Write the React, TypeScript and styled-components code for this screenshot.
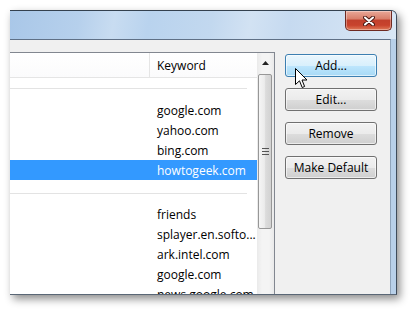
import React from "react";
import styled, { createGlobalStyle } from "styled-components";

const kText = "#000000";
const kClient = "#f0f0f0";
const kListBorder = "#828790";
const kFrame = "#b8d0e9";
const kSelect = "#3399ff";

const GlobalStyle = createGlobalStyle`
  html, body {
    margin: 0;
    padding: 0;
    background: #ffffff;
  }
  body {
    font-family: "Open Sans", "Noto Sans", sans-serif;
    font-size: 12px;
    color: ${kText};
  }
`;

const Stage = styled.div`
  position: relative;
  width: 417px;
  height: 313px;
  padding: 10px 0 0 10px;
  box-sizing: border-box;
  overflow: hidden;
`;

const Window = styled.div`
  width: 387px;
  height: 285px;
  box-sizing: border-box;
  display: flex;
  flex-direction: column;
  background: ${kFrame};
  border-top: 1px solid #34414f;
  border-right: 1px solid #3e4b5a;
  border-bottom: 1px solid #5a6776;
  border-top-right-radius: 6px;
  box-shadow: 3px 4px 8px rgba(0, 0, 0, 0.45);
  overflow: hidden;
`;

const TitleBar = styled.div`
  height: 28px;
  flex: none;
  display: flex;
  justify-content: flex-end;
  align-items: flex-start;
  padding-right: 4px;
  background: linear-gradient(
    100deg,
    #a9c7e8 0%,
    #b6d0ec 18%,
    #c8dcf1 27%,
    #b9d3ee 36%,
    #c2d8ef 52%,
    #d2e2f3 62%,
    #c6daf0 72%,
    #d9e7f5 100%
  );
`;

const CloseButton = styled.div`
  width: 47px;
  height: 20px;
  box-sizing: border-box;
  display: flex;
  align-items: center;
  justify-content: center;
  border: 1px solid #6e2a22;
  border-top: none;
  border-radius: 0 0 5px 5px;
  background: linear-gradient(
    to bottom,
    #e9a898 0%,
    #d9806c 40%,
    #c2402c 50%,
    #c8432d 75%,
    #e07a58 100%
  );
  box-shadow: inset 0 0 0 1px rgba(255, 255, 255, 0.35);
`;

const Body = styled.div`
  flex: 1;
  display: flex;
  padding-right: 5px;
  min-height: 0;
`;

const Client = styled.div`
  flex: 1;
  display: flex;
  align-items: stretch;
  gap: 10px;
  padding-top: 12px;
  background: ${kClient};
  border-top: 1px solid #5f7086;
  border-right: 1px solid #8fa4bb;
  min-height: 0;
  overflow: hidden;
`;

const ListPanel = styled.div`
  width: 265px;
  flex: none;
  box-sizing: border-box;
  display: flex;
  background: #ffffff;
  border-top: 1px solid ${kListBorder};
  border-right: 1px solid ${kListBorder};
  overflow: hidden;
`;

const ListArea = styled.div`
  width: 247px;
  flex: none;
  display: flex;
  flex-direction: column;
`;

const Header = styled.div`
  height: 25px;
  flex: none;
  box-sizing: border-box;
  display: flex;
  border-bottom: 1px solid #e5e5e5;
  background: linear-gradient(to bottom, #ffffff, #fbfbfc);
`;

const HeadCell = styled.div<{ $width?: number }>`
  ${(p) => (p.$width ? `width: ${p.$width}px; flex: none;` : "flex: 1;")}
  box-sizing: border-box;
  display: flex;
  align-items: center;
  padding-left: 7px;
  border-right: ${(p) => (p.$width ? "1px solid #e5e5e5" : "none")};
`;

const GroupGap = styled.div<{ $height: number; $line: number }>`
  height: ${(p) => p.$height}px;
  flex: none;
  box-sizing: border-box;
  padding-top: ${(p) => p.$line}px;

  &::before {
    content: "";
    display: block;
    width: 237px;
    height: 1px;
    background: #e3e3e3;
  }
`;

const Row = styled.div<{ $selected?: boolean }>`
  height: 20px;
  flex: none;
  display: flex;
  align-items: center;
  padding-left: 147px;
  white-space: nowrap;
  background: ${(p) => (p.$selected ? kSelect : "transparent")};
  color: ${(p) => (p.$selected ? "#ffffff" : kText)};
`;

const Scrollbar = styled.div`
  width: 17px;
  flex: none;
  display: flex;
  flex-direction: column;
  align-items: center;
  background: linear-gradient(to right, #eaeaea, #f4f4f4 30%, #f4f4f4 70%, #eaeaea);
`;

const ArrowButton = styled.div`
  width: 17px;
  height: 20px;
  flex: none;
  display: flex;
  align-items: center;
  justify-content: center;
`;

const Thumb = styled.div`
  width: 14px;
  height: 155px;
  margin-top: 1px;
  margin-right: 1px;
  box-sizing: border-box;
  display: flex;
  align-items: center;
  justify-content: center;
  border: 1px solid #979797;
  border-radius: 2px;
  background: linear-gradient(to right, #f5f5f5 0%, #ececec 45%, #dcdcdc 55%, #d2d2d2 100%);
`;

const ButtonColumn = styled.div`
  width: 92px;
  flex: none;
  display: flex;
  flex-direction: column;
  gap: 11px;
  padding-top: 2px;
`;

const DialogButton = styled.div<{ $hover?: boolean }>`
  height: 23px;
  box-sizing: border-box;
  display: flex;
  align-items: center;
  justify-content: center;
  border: 1px solid ${(p) => (p.$hover ? "#3c7fb1" : "#707070")};
  border-radius: 3px;
  background: ${(p) =>
    p.$hover
      ? "linear-gradient(to bottom, #eaf6fd 0%, #d9f0fc 50%, #bee6fd 51%, #a7d9f5 100%)"
      : "linear-gradient(to bottom, #f2f2f2 0%, #ebebeb 50%, #dddddd 51%, #cfcfcf 100%)"};
  box-shadow: inset 0 0 0 1px rgba(255, 255, 255, 0.6);
`;

const Cursor = styled.svg`
  position: absolute;
  left: 295px;
  top: 68px;
`;

const defaults = ["google.com", "yahoo.com", "bing.com", "howtogeek.com"];
const others = [
  "friends",
  "splayer.en.softo...",
  "ark.intel.com",
  "google.com",
  "news.google.com",
];

export default function App() {
  return (
    <>
      <GlobalStyle />
      <Stage>
        <Window>
          <TitleBar>
            <CloseButton>
              <svg width="12" height="10" viewBox="0 0 12 10">
                <path d="M2 1.5 L10 8.5 M10 1.5 L2 8.5" stroke="#4a1a14" strokeWidth="4" strokeLinecap="round" />
                <path d="M2 1.5 L10 8.5 M10 1.5 L2 8.5" stroke="#ffffff" strokeWidth="2" strokeLinecap="round" />
              </svg>
            </CloseButton>
          </TitleBar>
          <Body>
            <Client>
              <ListPanel>
                <ListArea>
                  <Header>
                    <HeadCell $width={140} />
                    <HeadCell>Keyword</HeadCell>
                  </Header>
                  <GroupGap $height={22} $line={10} />
                  {defaults.map((k, i) => (
                    <Row key={k} $selected={i === defaults.length - 1}>
                      {k}
                    </Row>
                  ))}
                  <GroupGap $height={24} $line={13} />
                  {others.map((k, i) => (
                    <Row key={i}>{k}</Row>
                  ))}
                </ListArea>
                <Scrollbar>
                  <ArrowButton>
                    <svg width="7" height="4" viewBox="0 0 7 4">
                      <path d="M0 4 L3.5 0 L7 4 Z" fill="#222" />
                    </svg>
                  </ArrowButton>
                  <Thumb>
                    <svg width="7" height="7" viewBox="0 0 7 7">
                      <path d="M0 0.5 H7 M0 3.5 H7 M0 6.5 H7" stroke="#555" strokeWidth="1" />
                    </svg>
                  </Thumb>
                </Scrollbar>
              </ListPanel>
              <ButtonColumn>
                <DialogButton $hover>Add...</DialogButton>
                <DialogButton>Edit...</DialogButton>
                <DialogButton>Remove</DialogButton>
                <DialogButton>Make Default</DialogButton>
              </ButtonColumn>
            </Client>
          </Body>
        </Window>
        <Cursor width="13" height="21" viewBox="0 0 13 21">
          <path
            d="M0.5 0.5 L0.5 16.5 L4.5 12.8 L7.2 19.5 L9.6 18.5 L7 12 L12 12 Z"
            fill="#ffffff"
            stroke="#000000"
            strokeWidth="1"
            strokeLinejoin="round"
          />
        </Cursor>
      </Stage>
    </>
  );
}
